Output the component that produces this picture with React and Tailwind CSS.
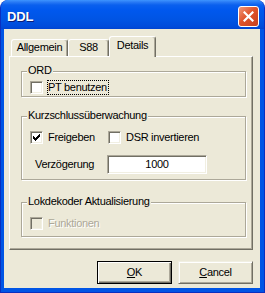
import React from 'react';

const sunken =
  'border border-t-[#ACA899] border-l-[#ACA899] border-r-white border-b-white shadow-[inset_1px_1px_0_#716F64,inset_-1px_-1px_0_#F1EFE2]';

function Check({ checked, disabled }) {
  return (
    <span
      className={`w-[13px] h-[13px] shrink-0 flex items-center justify-center ${sunken} ${
        disabled ? 'bg-[#ECE9D8]' : 'bg-white'
      }`}
    >
      {checked && (
        <svg width="7" height="7" viewBox="0 0 7 7" shapeRendering="crispEdges">
          <path
            fill={disabled ? '#ACA899' : '#000'}
            d="M0 2h1v3H0zM1 3h1v3H1zM2 4h1v3H2zM3 3h1v3H3zM4 2h1v3H4zM5 1h1v3H5zM6 0h1v3H6z"
          />
        </svg>
      )}
    </span>
  );
}

function CheckRow({ label, checked, disabled, focused, className = '' }) {
  return (
    <div className={`flex items-center h-[15px] ${className}`}>
      <Check checked={checked} disabled={disabled} />
      <span
        className={`ml-[4px] border leading-[13px] pr-[1px] ${
          focused ? 'border-dotted border-black' : 'border-transparent'
        } ${disabled ? 'text-[#ACA899] [text-shadow:1px_1px_0_#fff]' : ''}`}
      >
        {label}
      </span>
    </div>
  );
}

function Group({ title, className = '', children }) {
  return (
    <div
      className={`relative border border-[#ACA899] shadow-[inset_1px_1px_0_#fff,1px_1px_0_#fff] ${className}`}
    >
      <span className="absolute -top-[8px] left-[5px] bg-[#ECE9D8] px-[1px] leading-[13px]">{title}</span>
      {children}
    </div>
  );
}

function Tab({ label, width, selected }) {
  return (
    <div
      className={`${width} flex items-center justify-center rounded-t-[3px] border-t border-l border-white border-r border-r-[#716F64] shadow-[inset_-1px_0_0_#ACA899] bg-[#ECE9D8] ${
        selected ? 'h-[21px] pb-[3px] relative z-10' : 'h-[17px] mb-[1px] pb-[1px]'
      }`}
    >
      {label}
    </div>
  );
}

export default function App() {
  return (
    <div className="w-[265px] h-[293px] bg-white">
      <div className="w-full h-full flex flex-col rounded-t-[8px] overflow-hidden bg-[#0055E5] border-x border-b border-[#0A2FC0] font-['Liberation_Sans',Arial,sans-serif] text-[11px] tracking-[-0.3px] text-black">
        {/* title bar */}
        <div className="h-[29px] shrink-0 flex items-center pt-[4px] pl-[6px] pr-[5px] bg-[linear-gradient(to_bottom,#3D95FF_0px,#2A7BF5_2px,#0A60EE_5px,#0058EE_10px,#0054E3_20px,#004BDA_27px,#0044D0_29px)]">
          <span className="text-white font-bold text-[13px] tracking-[-0.2px] [text-shadow:1px_1px_0_#0A1E7A]">DDL</span>
          <button className="ml-auto w-[21px] h-[21px] rounded-[3px] border border-white flex items-center justify-center bg-[linear-gradient(135deg,#F0997A_0%,#E0542C_45%,#C7401E_100%)]">
            <svg width="11" height="11" viewBox="0 0 11 11">
              <path d="M1.5 1.5L9.5 9.5M9.5 1.5L1.5 9.5" stroke="#fff" strokeWidth="2.2" strokeLinecap="square" />
            </svg>
          </button>
        </div>

        {/* client area */}
        <div className="flex-1 ml-[3px] mr-[4px] mb-[4px] bg-[#ECE9D8] flex flex-col">
          <div className="flex items-end h-[21px] mt-[7px] pl-[7px] relative z-10">
            <Tab label="Allgemein" width="w-[57px]" />
            <Tab label="S88" width="w-[41px]" />
            <Tab label="Details" width="w-[47px]" selected />
          </div>

          <div className="relative -mt-[1px] ml-[5px] w-[244px] h-[194px] border-t border-l border-white border-r border-b border-r-[#716F64] border-b-[#716F64] shadow-[inset_-1px_-1px_0_#ACA899] pl-[11px] pr-[6px]">
            <Group title="ORD" className="mt-[14px] h-[26px] pl-[8px] pt-[9px]">
              <CheckRow label="PT benutzen" focused className="-mt-[1px]" />
            </Group>

            <Group title="Kurzschlussüberwachung" className="mt-[19px] h-[64px] pl-[8px] pt-[14px]">
              <div className="flex">
                <CheckRow label="Freigeben" checked className="w-[78px] -mt-[1px]" />
                <CheckRow label="DSR invertieren" className="-mt-[1px]" />
              </div>
              <div className="flex items-center mt-[10px]">
                <span className="w-[77px] pl-[5px]">Verzögerung</span>
                <div className={`w-[100px] h-[19px] bg-white flex items-center justify-center ${sunken}`}>1000</div>
              </div>
            </Group>

            <Group title="Lokdekoder Aktualisierung" className="mt-[22px] h-[35px] pl-[8px] pt-[14px]">
              <CheckRow label="Funktionen" disabled className="-mt-[1px]" />
            </Group>
          </div>

          <div className="flex justify-end gap-[6px] mt-[11px] pr-[7px]">
            <button className="w-[75px] h-[23px] border border-black bg-[#ECE9D8] shadow-[inset_1px_1px_0_#fff,inset_-1px_-1px_0_#716F64,inset_-2px_-2px_0_#ACA899] flex items-center justify-center">
              <span><span className="underline">O</span>K</span>
            </button>
            <button className="w-[75px] h-[23px] border border-t-[#F1EFE2] border-l-[#F1EFE2] border-r-[#716F64] border-b-[#716F64] bg-[#ECE9D8] shadow-[inset_1px_1px_0_#fff,inset_-1px_-1px_0_#ACA899] flex items-center justify-center">
              <span><span className="underline">C</span>ancel</span>
            </button>
          </div>
        </div>
      </div>
    </div>
  );
}
